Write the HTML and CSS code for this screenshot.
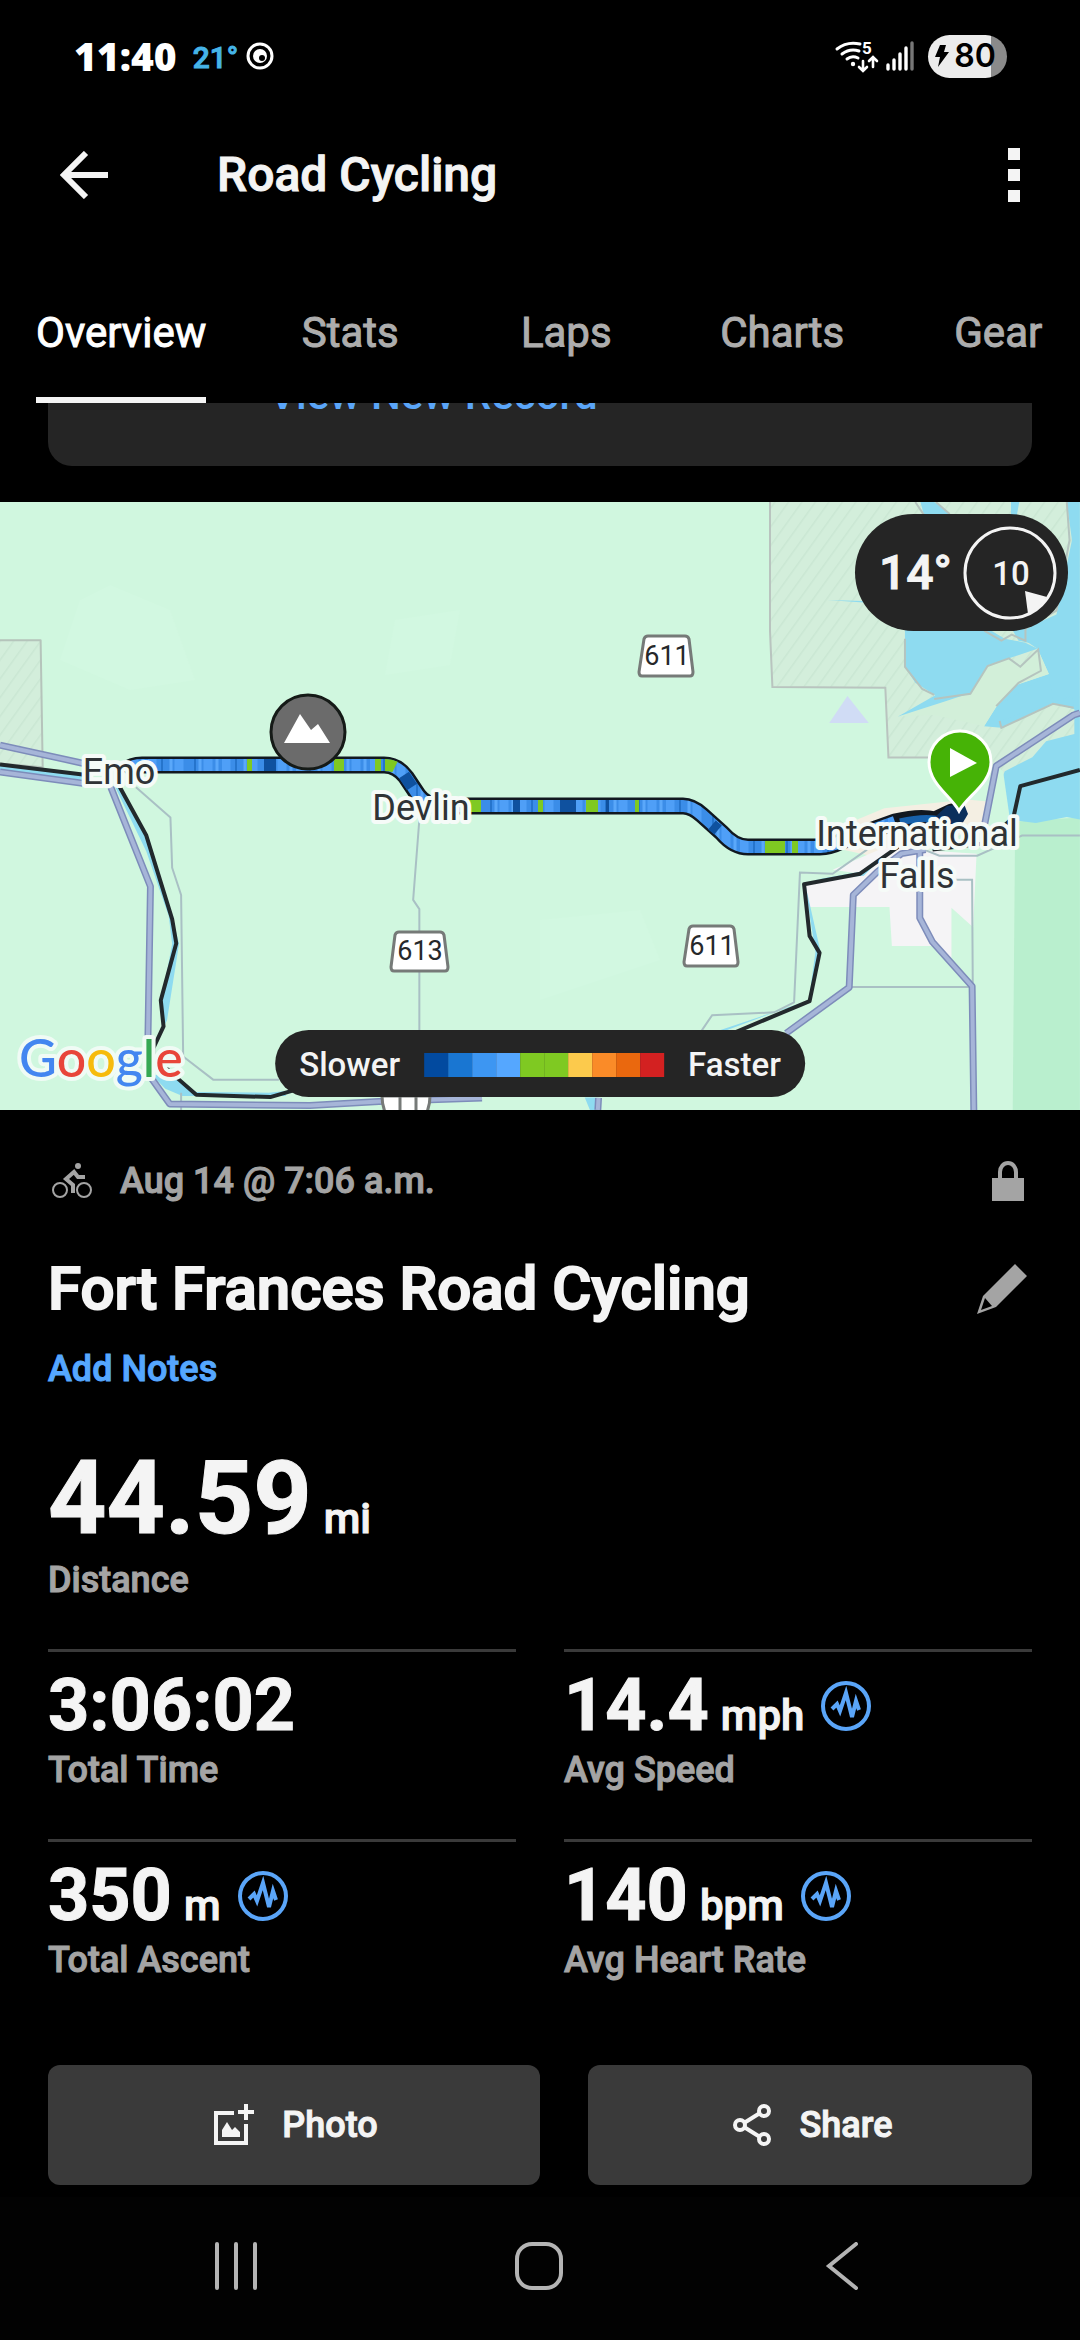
FILE: index.html
```html
<!DOCTYPE html>
<html lang="en">
<head>
<meta charset="utf-8">
<meta name="viewport" content="width=device-width, initial-scale=1">
<title>Road Cycling</title>
<link rel="stylesheet" href="styles.css">
</head>
<body>
<header class="status-bar">
  <div class="status-left">
    <span class="clock">11:40</span>
    <span class="temp">21°</span>
    <svg class="status-app" viewBox="0 0 28 28" width="28" height="28" aria-hidden="true">
      <circle cx="14" cy="14" r="12" fill="none" stroke="#fff" stroke-width="3"/>
      <circle cx="14" cy="14" r="7" fill="#fff"/>
      <circle cx="16" cy="16" r="3" fill="#000"/>
    </svg>
  </div>
  <div class="status-right">
    <svg class="wifi" viewBox="0 0 44 32" width="44" height="32" aria-hidden="true">
      <g fill="none" stroke="#fff" stroke-width="3" stroke-linecap="round">
        <path d="M2 9Q12 1 25 4M7 14Q15 8 24 11M12 19Q17 15 23 18"/>
        <path d="M28 21V30M24 27L28 31L32 27M38 27V18M34 21L38 17L42 21" stroke-width="2.6"/>
      </g>
      <circle cx="18" cy="24" r="2.2" fill="#fff"/>
      <text x="27" y="14" class="wifi-band">5</text>
    </svg>
    <svg class="signal" viewBox="0 0 28 30" width="28" height="30" aria-hidden="true">
      <g stroke="#fff" stroke-width="3.4" stroke-linecap="round">
        <path d="M2 24V28M8 19V28M14 13V28M20 7V28"/>
        <path d="M26 2V28" stroke="#777"/>
      </g>
    </svg>
    <span class="battery">
      <svg viewBox="0 0 14 22" width="14" height="22" aria-hidden="true"><path d="M5 0H11L9 7H14L3 22L5 12H0Z" fill="#000"/></svg>
      <span>80</span>
    </span>
  </div>
</header>

<div class="app-bar">
  <button class="icon-button" type="button" aria-label="Back">
    <svg viewBox="0 0 48 48" width="48" height="48"><path d="M26 2L4 24L26 46M4 24H48" fill="none" stroke="#f4f4f4" stroke-width="6"/></svg>
  </button>
  <h1 class="screen-title">Road Cycling</h1>
  <button class="icon-button" type="button" aria-label="More options">
    <svg viewBox="0 0 12 54" width="12" height="54" fill="#f4f4f4"><path d="M0 0H12V12H0ZM0 21H12V33H0ZM0 42H12V54H0Z"/></svg>
  </button>
</div>

<nav class="tabs" aria-label="Activity sections">
  <a class="tab" href="#overview" aria-current="page"><span>Overview</span></a>
  <a class="tab" href="#stats"><span>Stats</span></a>
  <a class="tab" href="#laps"><span>Laps</span></a>
  <a class="tab" href="#charts"><span>Charts</span></a>
  <a class="tab" href="#gear"><span>Gear</span></a>
</nav>

<main>
  <section class="record-card"><a class="record-link" href="#record">View New Record</a></section>

  <section class="map" aria-label="Route map">
    <svg class="map-canvas" viewBox="0 502 1080 608">
      <defs>
        <pattern id="hatch" width="30" height="30" patternUnits="userSpaceOnUse" patternTransform="rotate(-50)">
          <rect width="30" height="30" fill="#d3eedb"/><path d="M0 2H30" stroke="#cae7d3" stroke-width="4"/>
        </pattern>
        <pattern id="pace" width="74" height="20" patternUnits="userSpaceOnUse">
          <rect width="74" height="20" fill="#3b8de8"/>
          <path d="M4 0V20M31 0V20M60 0V20" stroke="#4f9ff7" stroke-width="9"/>
          <path d="M14 0V20M47 0V20" stroke="#2574cc" stroke-width="2"/>
          <path d="M23 0V20M52 0V20M69 0V20" stroke="#5aa8fa" stroke-width="3"/>
        </pattern>
      </defs>
      <rect y="502" width="1080" height="608" fill="#d0f7df"/>
      <g fill="#d2f8e1">
        <path d="M80 600L110 585L170 610L195 680L130 690L60 660Z"/>
        <path d="M395 620L460 610L450 665L385 675Z"/>
        <path d="M540 920L640 910L660 960L540 1000Z"/>
      </g>
      <!-- land, water and towns on the eastern half -->
      <g transform="translate(540 490) scale(.3443 .4018)">
        <path d="M1380 825L1568 815V1543H1373Z" fill="#b9efce"/>
        <path d="M668 30V350L675 490L1003 492L1012 666H1180L1345 720L1430 665L1568 600V30Z" fill="url(#hatch)"/>
        <path d="M668 30V350L675 490L1003 492L1012 666H1150" fill="none" stroke="#b9c4bf" stroke-width="2" vector-effect="non-scaling-stroke"/>
        <g fill="#8edbf0">
          <path d="M1060 340H1290L1350 370L1410 380L1445 395L1300 437L1250 505L1145 545L1040 564L1148 511L1090 480L1060 440Z"/>
          <path d="M1530 30H1568V820L1530 814L1440 829L1360 820L1345 710L1350 700L1430 665L1470 625L1552 607V545L1490 530L1340 592L1290 588L1325 540L1385 485L1478 458L1445 395L1410 375V345L1500 310L1545 125Z"/>
          <path d="M1105 30H1145L1195 62H1115ZM1368 30H1392L1385 62H1368ZM835 274L940 276V280Z"/>
          <path d="M1370 345H1420V380L1390 375Z"/>
        </g>
        <path d="M1325 540L1290 588L1545 513L1552 545L1490 530L1478 458Z" fill="#8edbf0"/>
        <path d="M1250 505L1300 437L1362 418L1395 440L1445 395L1478 458L1385 485L1325 540L1290 588L1145 560L1040 564L1180 525Z" fill="#d2efd9"/>
        <path d="M1145 520L1250 507L1300 438L1362 419L1395 440L1447 397L1455 450L1390 480L1325 538M1335 575L1340 592L1490 532L1550 542M1090 30L1115 62M1150 30L1190 60M1530 30L1538 125L1500 300L1410 345V375L1370 360L1340 375L1290 350M1060 370V440L1110 495L1145 510" fill="none" stroke="#b5c4bf" stroke-width="2" vector-effect="non-scaling-stroke"/>
        <path d="M893 513L840 580H955Z" fill="#d0dcf5"/>
        <path d="M1345 700L1365 820H1300L1325 687Z" fill="#d0f7df"/>
        <path d="M880 835L1000 792L1240 770L1300 775L1290 830L1130 895L960 910L850 890Z" fill="#f4efe3"/>
        <path d="M850 945L1000 890L1268 905L1258 1088L1195 1040V1165L1140 1135H1022L1015 1038H780L770 980L930 955Z" fill="#f5f4f6"/>
        <path d="M770 980L815 1150L783 1270L520 1345H540L680 1300L780 1275L800 1150L770 985ZM800 970L940 960L1000 910L930 950ZM130 1512H160V1543H145Z" fill="#8edbf0"/>
        <g fill="none" stroke="#a9c0c4" stroke-width="2">
          <path vector-effect="non-scaling-stroke" d="M950 895L850 955L755 952L738 1275L680 1300L500 1307L470 1345"/>
          <path vector-effect="non-scaling-stroke" d="M1100 890L1160 910H1270L1400 860H1568M1200 970H1255L1257 1237H900"/>
        </g>
        <g fill="none" stroke-linejoin="round">
          <path vector-effect="non-scaling-stroke" stroke="#7d8cba" stroke-width="7" d="M1568 555L1550 560L1325 687L1292 830M1120 895L1050 905L980 950L910 1008L898 1238L715 1352M170 1513L168 1543M1103 890V1065L1140 1125L1255 1235L1260 1543"/>
          <path vector-effect="non-scaling-stroke" stroke="#a6b5d8" stroke-width="4" d="M1568 555L1550 560L1325 687L1292 830M1120 895L1050 905L980 950L910 1008L898 1238L715 1352M170 1513L168 1543M1103 890V1065L1140 1125L1255 1235L1260 1543"/>
          <path vector-effect="non-scaling-stroke" stroke="#22292c" stroke-width="4" d="M1568 697L1395 737L1375 815L1290 880L1140 895M1040 888L930 955L767 981L783 1110L812 1152L783 1272L560 1352"/>
        </g>
      </g>
      <!-- roads and rivers on the western half -->
      <g transform="translate(0 490) scale(.3443 .4018)" fill="none" stroke-linejoin="round">
        <path d="M-10 374H118L124 690L-10 680Z" fill="url(#hatch)" stroke="#b5c4bb" stroke-width="2" vector-effect="non-scaling-stroke"/>
        <path d="M0 685L240 712V722L0 697ZM335 740L425 900L490 1060L500 1130L480 1220L465 1270L475 1335L465 1350L485 1320L520 1130L500 1060L430 860L350 740ZM440 1455L510 1460L570 1498L780 1500L830 1496V1508H530L480 1490Z" fill="#8edbf0"/>
        <path vector-effect="non-scaling-stroke" stroke="#a9c0c4" stroke-width="2" d="M395 740L495 815L500 940L526 1008L532 1410L620 1468H810M526 1500V1543M1218 820L1200 1020L1218 1043V1345"/>
        <path vector-effect="non-scaling-stroke" stroke="#7d8cba" stroke-width="7" d="M0 635L240 680M0 702L240 730M322 740L437 987L428 1450L493 1528L900 1532L1100 1522L1400 1513"/>
        <path vector-effect="non-scaling-stroke" stroke="#a6b5d8" stroke-width="4" d="M0 635L240 680M0 702L240 730M322 740L437 987L428 1450L493 1528L900 1532L1100 1522L1400 1513"/>
        <path vector-effect="non-scaling-stroke" stroke="#22292c" stroke-width="4" d="M0 683L240 708M345 735L425 860L500 1068L512 1128L467 1270L475 1335L445 1390V1410L510 1460L570 1505L785 1511L850 1495"/>
      </g>
      <!-- recorded route -->
      <g fill="none" stroke-linejoin="round">
        <path d="M124 772Q130 765 142 765H384Q397 765 406 777L418 795Q426 806 440 806H683Q692 806 702 815L722 833Q734 847 748 847H820Q830 847 842 841L895 822Q920 816 935 820L952 812H964" stroke="#111820" stroke-width="17"/>
        <path d="M126 772Q130 765 142 765H384Q397 765 406 777L418 795Q426 806 440 806H683Q692 806 702 815L722 833Q734 847 748 847H820Q830 847 842 841L895 822" stroke="url(#pace)" stroke-width="12"/>
        <path d="M247 765H252M334 765H344M375 765H381M385 765Q391 765 395 767M460 806H481M538 806H543M586 806H598M635 806H639M765 847H785M792 847H798" stroke="#7fc922" stroke-width="12"/>
        <path d="M264 765H276M513 806H520M560 806H576M606 806H609M404 775L412 787M712 825L718 830" stroke="#0f519f" stroke-width="12"/>
        <path d="M900 822Q925 816 940 820L960 812" stroke="#1761ab" stroke-width="7"/>
      </g>
      <path d="M936 816L947 806L964 804L968 814L962 824H940Z" fill="#0b2f5c"/>
      <!-- highway shields -->
      <g fill="#fff" stroke="#767a78" stroke-width="3" stroke-linejoin="round">
        <path d="M648 636H685Q688 636 689 639L693 672Q693 676 690 676H642Q639 676 639 672L644 639Q645 636 648 636Z"/>
        <path d="M693 926H730Q733 926 734 929L738 962Q738 966 735 966H687Q684 966 684 962L689 929Q690 926 693 926Z"/>
        <path d="M399 932H440Q443 932 444 935L448 967Q448 971 445 971H394Q391 971 391 967L395 935Q396 932 399 932Z"/>
        <path d="M382 1096Q382 1106 386 1114H426Q430 1106 430 1096ZM400 1096V1112M416 1096V1112"/>
      </g>
      <g class="shield-label" text-anchor="middle">
        <text x="667" y="665">611</text>
        <text x="712" y="955">611</text>
        <text x="420" y="960">613</text>
      </g>
      <g class="place" text-anchor="middle">
        <text x="119" y="784">Emo</text>
        <text x="421" y="820">Devlin</text>
        <text x="917" y="846">International</text>
        <text x="917" y="888">Falls</text>
      </g>
      <circle cx="308" cy="732" r="37" fill="#6b6b6b" stroke="#151a17" stroke-width="3"/>
      <path d="M284 743L300 714L311 730L318 724L330 743Z" fill="#fff"/>
      <path d="M959 811C951 796 929 784 929 762A31 31 0 0 1 991 762C991 784 967 796 959 811Z" fill="#46b306" stroke="#fff" stroke-width="3"/>
      <path d="M950 748V777L977 763Z" fill="#fff"/>
      <text class="map-logo" x="19" y="1077"><tspan fill="#4386f0">G</tspan><tspan fill="#e8453a">o</tspan><tspan fill="#f6bb0c">o</tspan><tspan fill="#4386f0">g</tspan><tspan fill="#36a854">l</tspan><tspan fill="#e8453a">e</tspan></text>
    </svg>

    <div class="weather">
      <span class="weather-temp">14°</span>
      <svg class="wind" viewBox="0 0 94 94" width="94" height="94">
        <circle cx="47" cy="47" r="45" fill="none" stroke="#f4f4f4" stroke-width="3"/>
        <path d="M62 65L84 71Q77 82 65 88Z" fill="#f4f4f4"/>
        <text x="48" y="59" text-anchor="middle">10</text>
      </svg>
    </div>

    <div class="legend">
      <span>Slower</span>
      <span class="legend-scale"><i class="c1"></i><i class="c2"></i><i class="c3"></i><i class="c4"></i><i class="c5"></i><i class="c5"></i><i class="c6"></i><i class="c7"></i><i class="c8"></i><i class="c9"></i></span>
      <span>Faster</span>
    </div>
  </section>

  <section class="details">
    <div class="row">
      <div class="when">
        <svg viewBox="0 0 40 36" width="40" height="36" aria-hidden="true">
          <g fill="none" stroke="#a4a4a4"><circle cx="8" cy="27" r="7" stroke-width="2"/><circle cx="32" cy="27" r="7" stroke-width="2"/>
          <path d="M21 30V22L14 16L22 9L26 14H33" stroke-width="4"/></g>
          <circle cx="26" cy="3" r="3" fill="#a4a4a4"/>
        </svg>
        <span class="caption">Aug 14 @ 7:06 a.m.</span>
      </div>
      <svg class="lock" viewBox="0 0 32 40" width="32" height="40" role="img" aria-label="Private">
        <path d="M0 17H32V40H0Z" fill="#a4a4a4"/><path d="M8 18V11A8 9 0 0 1 24 11V18" fill="none" stroke="#a4a4a4" stroke-width="4"/>
      </svg>
    </div>
    <div class="row title-row">
      <h2 class="activity-name">Fort Frances Road Cycling</h2>
      <button class="icon-button" type="button" aria-label="Edit name">
        <svg viewBox="0 0 50 50" width="50" height="50"><path d="M38 0L50 12L19 43L0 50L6 32ZM8 34L4 46L15 42Z" fill="#a4a4a4" fill-rule="evenodd"/></svg>
      </button>
    </div>
    <a class="notes-link" href="#notes">Add Notes</a>

    <div class="headline">
      <p class="headline-value">44.59<span class="unit">mi</span></p>
      <p class="caption">Distance</p>
    </div>

    <div class="stats">
      <div class="stat">
        <p class="stat-value"><span>3:06:02</span></p>
        <p class="caption">Total Time</p>
      </div>
      <div class="stat">
        <p class="stat-value"><span>14.4<span class="unit">mph</span></span>
          <svg class="pulse" viewBox="0 0 50 50" width="50" height="50"><circle cx="25" cy="25" r="23"/><path d="M11 28L16 23L19 30L25 12L31 36L35 20L38 29"/></svg></p>
        <p class="caption">Avg Speed</p>
      </div>
      <div class="stat">
        <p class="stat-value"><span>350<span class="unit">m</span></span>
          <svg class="pulse" viewBox="0 0 50 50" width="50" height="50"><circle cx="25" cy="25" r="23"/><path d="M11 28L16 23L19 30L25 12L31 36L35 20L38 29"/></svg></p>
        <p class="caption">Total Ascent</p>
      </div>
      <div class="stat">
        <p class="stat-value"><span>140<span class="unit">bpm</span></span>
          <svg class="pulse" viewBox="0 0 50 50" width="50" height="50"><circle cx="25" cy="25" r="23"/><path d="M11 28L16 23L19 30L25 12L31 36L35 20L38 29"/></svg></p>
        <p class="caption">Avg Heart Rate</p>
      </div>
    </div>

    <div class="actions">
      <button class="action" type="button">
        <svg viewBox="0 0 48 48" width="48" height="48"><path d="M24 12H6V42H36V23" fill="none" stroke="#f4f4f4" stroke-width="4"/><path d="M36 3V19M28 11H44" stroke="#f4f4f4" stroke-width="4"/><path d="M12 36V29L17 21L22 29L25 26L30 31V36Z" fill="#f4f4f4"/></svg>
        Photo
      </button>
      <button class="action" type="button">
        <svg viewBox="0 0 48 48" width="48" height="48" fill="none" stroke="#f4f4f4" stroke-width="4"><circle cx="36" cy="10" r="5"/><circle cx="12" cy="24" r="5"/><circle cx="36" cy="38" r="5"/><path d="M16 22L32 12M16 26L32 36"/></svg>
        Share
      </button>
    </div>
  </section>
</main>

<footer class="system-nav">
  <button type="button" aria-label="Recent apps"><svg viewBox="0 0 48 48" width="48" height="48"><path d="M5 2V46M24 2V46M43 2V46"/></svg></button>
  <button type="button" aria-label="Home"><svg viewBox="0 0 48 48" width="48" height="48"><rect x="2" y="2" width="44" height="44" rx="15"/></svg></button>
  <button type="button" aria-label="Back"><svg viewBox="0 0 48 48" width="48" height="48"><path d="M38 2L11 24L38 46"/></svg></button>
</footer>
</body>
</html>
```
FILE: styles.css
```css
* { box-sizing: border-box; }

body {
  margin: 0;
  min-height: 100vh;
  display: flex;
  flex-direction: column;
  overflow-x: hidden;
  background: #000;
  color: #f4f4f4;
  font-family: Roboto, "Liberation Sans", sans-serif;
  font-weight: 500;
}

h1, h2, p { margin: 0; }
a { text-decoration: none; }
svg { display: block; flex: none; }
button {
  padding: 0;
  border: 0;
  background: none;
  color: inherit;
  font: inherit;
}

/* Status bar */
.status-bar {
  display: flex;
  justify-content: space-between;
  align-items: center;
  height: 110px;
  padding: 2px 73px 0 74px;
}
.status-left, .status-right { display: flex; align-items: center; }
.clock {
  font: 800 39px/48px "Open Sans", sans-serif;
  color: #fff;
}
.temp {
  margin: 4px 8px 0 16px;
  font: 500 30px/40px Roboto, sans-serif;
  color: #45b4e8;
  -webkit-text-stroke: 1px;
}
.wifi { margin-right: 7px; overflow: visible; }
.wifi-band { font: 700 17px Roboto, sans-serif; fill: #fff; }
.signal { margin-right: 14px; }
.battery {
  display: flex;
  align-items: center;
  justify-content: center;
  gap: 5px;
  width: 79px;
  height: 43px;
  padding-right: 4px;
  border-radius: 22px;
  background: linear-gradient(90deg, #ececec 80%, #8a8a8a 80%);
  font: 600 32px/42px Inter, sans-serif;
  color: #000;
}

/* App bar and tabs */
.app-bar {
  display: flex;
  align-items: center;
  height: 130px;
  padding: 0 60px;
}
.screen-title {
  flex: 1;
  margin-left: 109px;
  font-size: 48px;
  line-height: 60px;
  font-weight: 500;
  -webkit-text-stroke: 1px;
}
.tabs { display: flex; overflow: hidden; }
.tab {
  flex: none;
  display: flex;
  justify-content: center;
  min-width: 216px;
  padding: 0 36px;
  font-size: 42px;
  line-height: 48px;
  font-weight: 400;
  color: #adadad;
  -webkit-text-stroke: 1px;
}
.tab span {
  padding: 69px 0 40px;
  border-bottom: 6px solid transparent;
}
.tab[aria-current] { color: #fff; }
.tab[aria-current] span { border-color: #f4f4f4; }

/* Record card, scrolled under the tabs */
.record-card {
  height: 63px;
  margin: 0 48px 36px;
  padding-left: 221px;
  overflow: hidden;
  border-radius: 0 0 24px 24px;
  background: #252525;
}
.record-link {
  display: block;
  margin-top: -30px;
  font-size: 42px;
  line-height: 44px;
  color: #5aa5f8;
}

/* Map */
.map { position: relative; }
.map-canvas { width: 100%; height: auto; }
.shield-label { font: 400 27px Roboto, sans-serif; fill: #26282a; }
.place {
  font: 400 36px Roboto, sans-serif;
  fill: #2f3336;
  stroke: #f6fbf8;
  stroke-width: 8px;
  stroke-linejoin: round;
  paint-order: stroke;
}
.map-logo {
  font: 500 52px Lato, sans-serif;
  stroke: #f0fbf5;
  stroke-width: 8px;
  stroke-linejoin: round;
  paint-order: stroke;
}
.weather {
  position: absolute;
  top: 12px;
  right: 12px;
  display: flex;
  align-items: center;
  justify-content: space-between;
  width: 213px;
  height: 117px;
  padding: 0 11px 0 24px;
  border-radius: 60px;
  background: #252525;
}
.weather-temp { font-size: 48px; line-height: 60px; -webkit-text-stroke: 1px; }
.wind { font: 500 33px Roboto, sans-serif; fill: #f4f4f4; }
.legend {
  position: absolute;
  left: 50%;
  bottom: 13px;
  transform: translateX(-50%);
  display: flex;
  align-items: center;
  gap: 24px;
  height: 67px;
  padding: 2px 24px 0;
  border-radius: 34px;
  background: #252525;
  font-size: 33px;
  line-height: 40px;
}
.legend-scale { display: flex; }
.legend-scale i { width: 24px; height: 24px; }
.c1 { background: #024a9f; }
.c2 { background: #1976d2; }
.c3 { background: #3d96f2; }
.c4 { background: #55a7ff; }
.c5 { background: #7fc922; }
.c6 { background: #fcca4c; }
.c7 { background: #fa8b28; }
.c8 { background: #ea680e; }
.c9 { background: #d32121; }

/* Activity details */
.details {
  padding: 47px 48px 12px;
  -webkit-text-stroke: 1px;
}
.row {
  display: flex;
  align-items: center;
  justify-content: space-between;
}
.when { display: flex; align-items: center; gap: 28px; padding-left: 4px; }
.lock { margin-right: 8px; }
.caption { font-size: 36px; line-height: 48px; color: #a4a4a4; }
.title-row { margin-top: 48px; padding-right: 5px; }
.activity-name { font-size: 60px; line-height: 72px; font-weight: 500; -webkit-text-stroke: 2px; }
.notes-link {
  display: block;
  margin-top: 20px;
  font-size: 36px;
  line-height: 48px;
  color: #55a7ff;
}
.headline { margin-top: 47px; }
.headline-value {
  font-size: 102px;
  line-height: 116px;
  font-weight: 700;
}
.unit {
  margin-left: 12px;
  font-size: 42px;
  line-height: 48px;
  font-weight: 500;
}
.stats {
  display: grid;
  grid-template-columns: 1fr 1fr;
  gap: 45px 48px;
  margin-top: 45px;
}
.stat { padding-top: 14px; border-top: 3px solid #3a3a3a; }
.stat-value {
  display: flex;
  align-items: center;
  gap: 17px;
  font-size: 72px;
  line-height: 80px;
  font-weight: 700;
}
.pulse { fill: none; stroke: #5aa5f8; stroke-width: 4px; }
.actions {
  display: grid;
  grid-template-columns: 492fr 444fr;
  gap: 48px;
  margin-top: 81px;
}
.action {
  display: flex;
  align-items: center;
  justify-content: center;
  gap: 24px;
  height: 120px;
  border-radius: 12px;
  background: #3a3a3a;
  font-size: 36px;
  line-height: 48px;
  -webkit-text-stroke: 1px;
}

/* System navigation */
.system-nav {
  flex: 1;
  display: grid;
  grid-template-columns: repeat(3, 1fr);
  align-items: center;
  justify-items: center;
  min-height: 120px;
  padding: 0 87px 6px 85px;
  background: #020202;
}
.system-nav svg {
  fill: none;
  stroke: #b4b4b4;
  stroke-width: 4px;
  stroke-linecap: round;
}
```
